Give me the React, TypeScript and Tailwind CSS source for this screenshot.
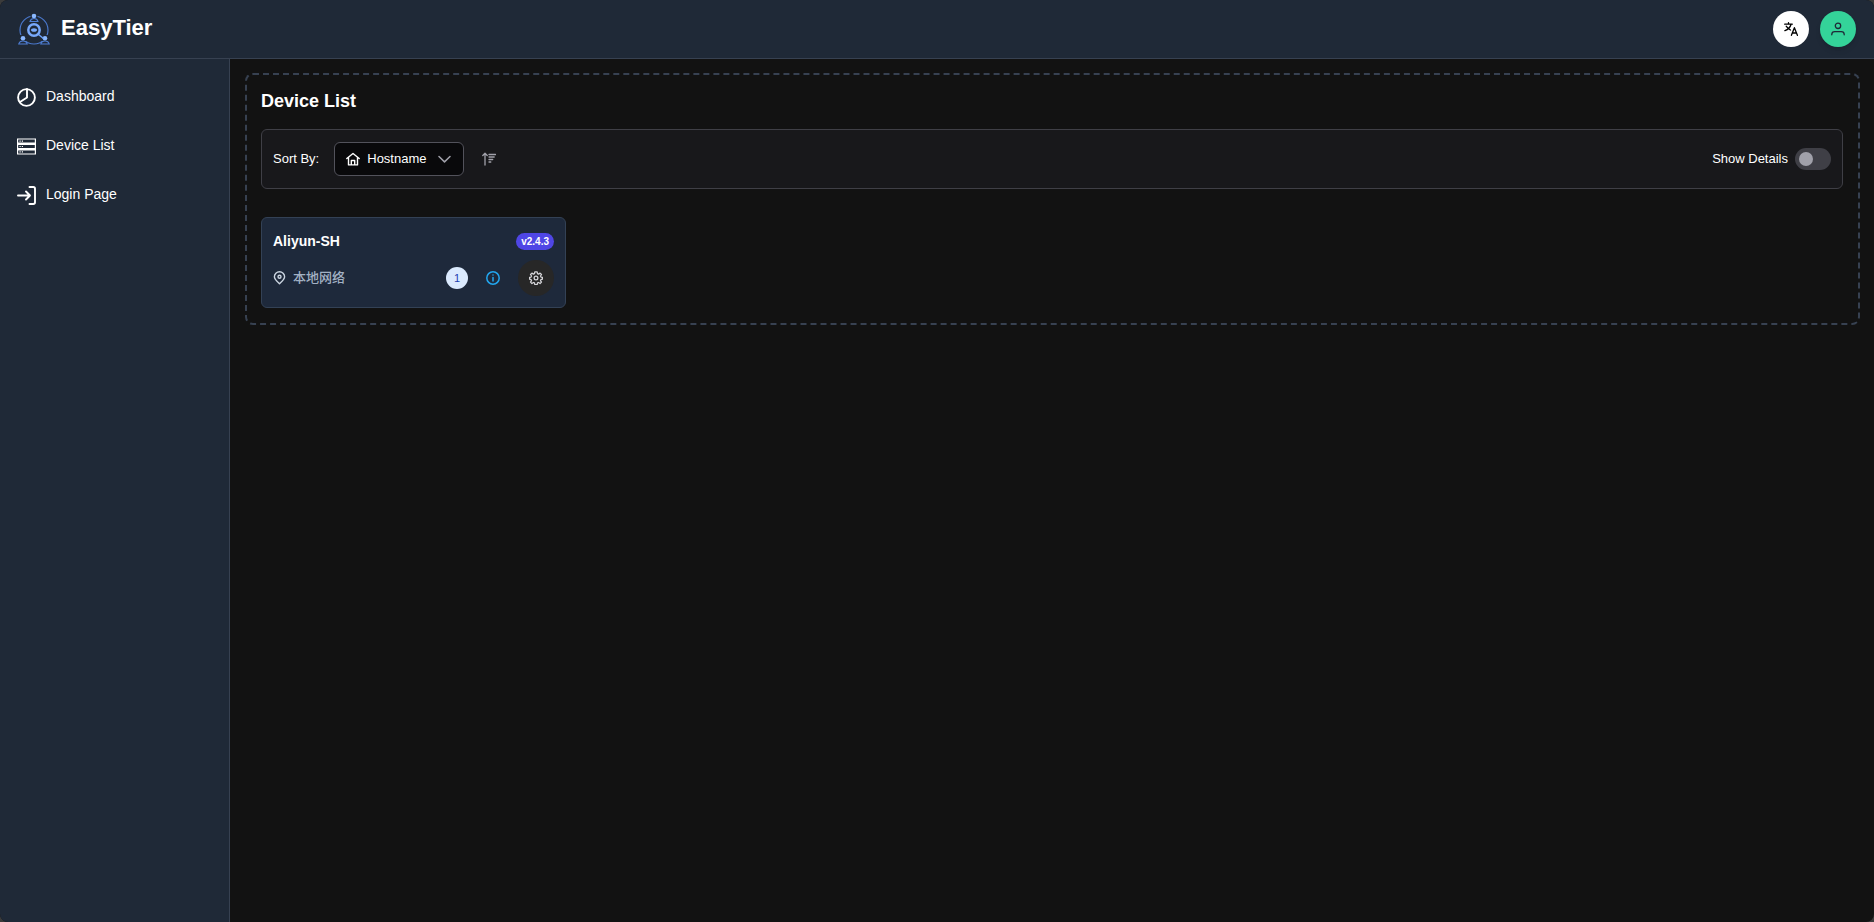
import { useState } from "react";

const strokeProps = {
  fill: "none",
  stroke: "currentColor",
  strokeLinecap: "round" as const,
  strokeLinejoin: "round" as const,
};

const Logo = () => (
  <svg className="size-8" viewBox="0 0 32 32" fill="none" stroke="#4f7fd6">
    <circle cx="16" cy="17" r="14" stroke="#4a78cc" strokeWidth="1.2" />
    <path d="M16 1v7" stroke="#1f2937" strokeWidth="7" />
    <path d="M1 25h7M24 25h7" stroke="#1f2937" strokeWidth="6" />
    <path d="M12 8.500c.5-2 2-3 4-3s3.500 1 4 3z" strokeWidth="1.100" />
    <path d="M.8 31c.5-2 2-3 4.200-3s3.700 1 4.200 3zM22.800 31c.5-2 2-3 4.200-3s3.700 1 4.200 3z" strokeWidth="1.100" />
    <circle cx="16" cy="3" r="2.300" fill="#8ab8ff" stroke="none" />
    <circle cx="5" cy="25.300" r="2.300" fill="#8ab8ff" stroke="none" />
    <circle cx="27" cy="25.300" r="2.300" fill="#8ab8ff" stroke="none" />
    <path d="M20.500 21.500l5 4" stroke="#6da0f8" strokeWidth="1.600" />
    <circle cx="16" cy="17" r="5.700" stroke="#78a9fb" strokeWidth="2.500" />
    <ellipse cx="16" cy="17" rx="3" ry="1.800" fill="#78a9fb" stroke="none" />
  </svg>
);

const ChartPieIcon = () => (
  <svg className="size-[19px]" viewBox="0 0 19 19" {...strokeProps} strokeWidth="1.900">
    <circle cx="9.500" cy="9.500" r="8.400" />
    <path d="M10 1v8.500L3 14" />
  </svg>
);

const ServerIcon = () => (
  <svg className="size-[19px]" viewBox="0 0 19 19" fill="none" stroke="currentColor">
    <path d="M.6 2h17.800v4.200H.6zM.6 7.400h17.800v4.200H.6zM.6 12.800h17.800v4.200H.6z" strokeWidth="1.200" />
    <path d="M2.500 4.100h1.200M4.800 4.100H6M2.500 9.500h1.200M4.800 9.500H6M2.500 14.900h1.200M4.800 14.900H6" strokeWidth="1.200" />
  </svg>
);

const SignInIcon = () => (
  <svg className="size-[19px]" viewBox="0 0 19 19" {...strokeProps} strokeWidth="1.900">
    <path d="M1 9.500h12M9 5.500l4 4-4 4M12.500 1h3.800c1 0 1.700.7 1.700 1.700v13.600c0 1-.7 1.700-1.700 1.700h-3.800" />
  </svg>
);

const LanguageIcon = () => (
  <svg className="size-[14px]" viewBox="0 0 14 14" {...strokeProps} strokeWidth="1.300">
    <path d="M.7 2.200h7.600M4.500.7v1.500M7 2.500C6.300 5 3.800 7.500.9 8.700M2.200 4.200C3.300 6 4.800 7.200 6.500 8M7.400 13.300l3-7.600 3 7.600M8.500 11h3.900" />
  </svg>
);

const UserIcon = () => (
  <svg className="size-[14px]" viewBox="0 0 14 14" {...strokeProps} strokeWidth="1.300">
    <circle cx="7" cy="3.800" r="2.700" />
    <path d="M.8 12.800v-.5c0-1.700 1.400-2.700 3-2.700h6.400c1.600 0 3 1 3 2.700v.5" />
  </svg>
);

const HomeIcon = () => (
  <svg className="size-[14px]" viewBox="0 0 14 14" {...strokeProps} strokeWidth="1.400">
    <path d="M.8 6.500L7 1.500l6.200 5M2.500 5.500v7.400h9V5.500M5.300 12.800V8.500h3.400v4.300" />
  </svg>
);

const ChevronIcon = () => (
  <svg className="size-[14px]" viewBox="0 0 14 14" {...strokeProps} strokeWidth="1.500">
    <path d="M1 4.500l5.500 5.400L12 4.500" />
  </svg>
);

const SortIcon = () => (
  <svg className="size-[14px]" viewBox="0 0 14 14" {...strokeProps} strokeWidth="1.300">
    <path d="M3 13V1.500M.8 3.500L3 1.300l2.200 2.200M7 2.500h6.500M7 5h5.200M7 7.500h3.700M7 10h1.800" />
  </svg>
);

const PinIcon = () => (
  <svg className="size-[14px]" viewBox="0 0 14 14" {...strokeProps} strokeWidth="1.400">
    <path d="M6.500 12.700C4.200 10.600 1.400 8.400 1.400 5.800a5.100 5 0 0 1 10.200 0c0 2.600-2.800 4.800-5.100 6.900z" />
    <circle cx="6.500" cy="5.700" r="1.500" />
  </svg>
);

const InfoIcon = () => (
  <svg className="size-[14px]" viewBox="0 0 14 14" {...strokeProps} strokeWidth="1.500">
    <circle cx="7" cy="7" r="6.200" />
    <path d="M7 6.600v3.500M7 3.900v.2" />
  </svg>
);

const CogIcon = () => (
  <svg className="size-[14px]" viewBox="0 0 24 24" {...strokeProps} strokeWidth="2.200">
    <circle cx="12" cy="12" r="3.200" />
    <path d="M10 1.500h4l.6 3 1.800.8L19 3.600 21.400 6l-1.700 2.600.8 1.800 2.500.6v3l-2.500.6-.8 1.800 1.700 2.600-2.400 2.400-2.600-1.700-1.800.8-.6 3h-4l-.6-3-1.800-.8L5 21.400 2.600 19l1.700-2.600-.8-1.800-2.500-.6v-3l2.500-.6.8-1.800L2.600 6 5 3.600l2.600 1.700 1.800-.8z" />
  </svg>
);

const menu = [
  { label: "Dashboard", icon: <ChartPieIcon /> },
  { label: "Device List", icon: <ServerIcon /> },
  { label: "Login Page", icon: <SignInIcon /> },
];

const Header = () => (
  <header className="flex h-[59px] items-center justify-between border-b border-[#374151] bg-[#1f2937] px-[18px]">
    <a href="#" className="flex items-center gap-[11px]">
      <Logo />
      <span className="pb-[2px] text-[22px] leading-7 font-bold">EasyTier</span>
    </a>
    <div className="flex items-center gap-[11px]">
      <button
        aria-label="Language"
        className="flex size-9 items-center justify-center rounded-full bg-white text-black"
      >
        <LanguageIcon />
      </button>
      <button
        aria-label="User"
        className="flex size-9 items-center justify-center rounded-full bg-[#34d399] text-[#1f2937] shadow-md"
      >
        <UserIcon />
      </button>
    </div>
  </header>
);

const Sidebar = () => (
  <nav className="w-[230px] shrink-0 border-r border-[#374151] bg-[#1f2937] px-[17px] pt-[14px]">
    <ul>
      {menu.map((item) => (
        <li key={item.label}>
          <a href="#" className="flex h-[49px] items-center gap-[10px] text-sm">
            {item.icon}
            <span className="pb-[3px]">{item.label}</span>
          </a>
        </li>
      ))}
    </ul>
  </nav>
);

const Toolbar = () => {
  const [details, setDetails] = useState(false);

  return (
    <div className="flex h-[60px] items-center justify-between rounded-md border border-[#3f3f46] bg-[#18181b] px-[11px] text-[13px]">
      <div className="flex items-center">
        <label htmlFor="sort" className="mr-[15px]">
          Sort By:
        </label>
        <div className="relative flex items-center">
          <select
            id="sort"
            className="h-[34px] w-[130px] appearance-none rounded-md border border-[#52525b] bg-[#09090b] pl-8 text-[13px]"
          >
            <option>Hostname</option>
          </select>
          <span className="pointer-events-none absolute left-3">
            <HomeIcon />
          </span>
          <span className="pointer-events-none absolute right-3 text-[#a1a1aa]">
            <ChevronIcon />
          </span>
        </div>
        <button aria-label="Sort direction" className="ml-[18px] text-[#a1a1aa]">
          <SortIcon />
        </button>
      </div>
      <label className="flex items-center gap-[7px]">
        Show Details
        <input
          type="checkbox"
          role="switch"
          checked={details}
          onChange={() => setDetails(!details)}
          className="flex h-[22px] w-9 appearance-none items-center rounded-full bg-[#3f3f46] px-1 before:size-[14px] before:rounded-full before:bg-[#a1a1aa] checked:justify-end checked:bg-[#34d399]"
        />
      </label>
    </div>
  );
};

const DeviceCard = () => (
  <article className="h-[91px] w-[305px] rounded-md border border-[#334155] bg-[#1e293b] px-[11px] pt-[13px]">
    <div className="flex h-5 items-center justify-between">
      <h3 className="text-sm font-bold">Aliyun-SH</h3>
      <span className="rounded-full bg-[#4f46e5] px-[5px] text-[10px] leading-[17px] font-bold">
        v2.4.3
      </span>
    </div>
    <div className="mt-[9px] flex items-center">
      <span className="flex grow items-center gap-[6px] text-[13px] leading-5 font-medium text-[#a3b1c4]">
        <span className="text-[#cbd5e1]">
          <PinIcon />
        </span>
        本地网络
      </span>
      <span className="flex size-[22px] items-center justify-center rounded-full bg-[#dbeafe] text-[11px] text-[#1e40af]">
        1
      </span>
      <button aria-label="Info" className="mx-[18px] text-[#22a7f0]">
        <InfoIcon />
      </button>
      <button
        aria-label="Settings"
        className="flex size-9 items-center justify-center rounded-full bg-[#272727] text-[#d4d4d8]"
      >
        <CogIcon />
      </button>
    </div>
  </article>
);

const App = () => {
  return (
    <div className="min-h-screen bg-[#3b3b3b]">
      <div className="flex min-h-screen flex-col overflow-hidden rounded-lg bg-[#121212] font-['Liberation_Sans','Noto_Sans_CJK_SC',sans-serif] text-white">
        <Header />
        <div className="flex grow">
          <Sidebar />
          <main className="grow py-[14px] pr-[14px] pl-[15px]">
            <section className="rounded-lg border-2 border-dashed border-[#374151] pt-[14px] pr-[15px] pb-[15px] pl-[14px]">
              <h2 className="mb-4 text-lg leading-6 font-bold">Device List</h2>
              <Toolbar />
              <div className="mt-7">
                <DeviceCard />
              </div>
            </section>
          </main>
        </div>
      </div>
    </div>
  );
};

export default App;
